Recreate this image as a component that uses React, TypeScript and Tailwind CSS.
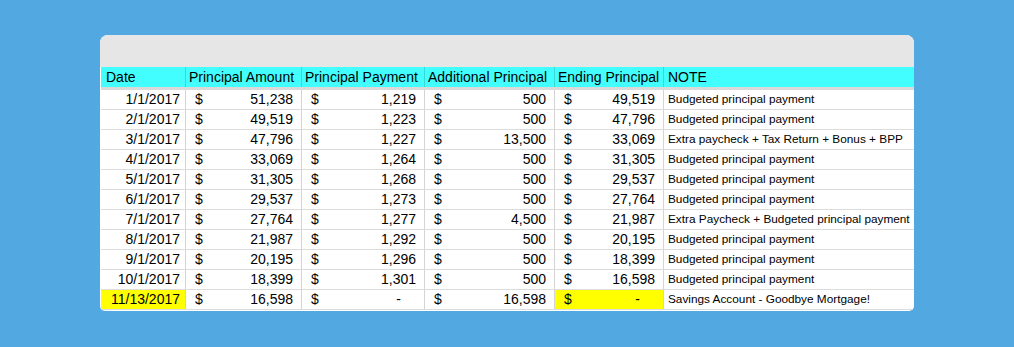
import React from "react";

type Row = {
  date: string;
  amount: string;
  payment: string;
  additional: string;
  ending: string;
  note: string;
  hl?: boolean;
};

const rows: Row[] = [
  { date: "1/1/2017", amount: "51,238", payment: "1,219", additional: "500", ending: "49,519", note: "Budgeted principal payment" },
  { date: "2/1/2017", amount: "49,519", payment: "1,223", additional: "500", ending: "47,796", note: "Budgeted principal payment" },
  { date: "3/1/2017", amount: "47,796", payment: "1,227", additional: "13,500", ending: "33,069", note: "Extra paycheck + Tax Return + Bonus + BPP" },
  { date: "4/1/2017", amount: "33,069", payment: "1,264", additional: "500", ending: "31,305", note: "Budgeted principal payment" },
  { date: "5/1/2017", amount: "31,305", payment: "1,268", additional: "500", ending: "29,537", note: "Budgeted principal payment" },
  { date: "6/1/2017", amount: "29,537", payment: "1,273", additional: "500", ending: "27,764", note: "Budgeted principal payment" },
  { date: "7/1/2017", amount: "27,764", payment: "1,277", additional: "4,500", ending: "21,987", note: "Extra Paycheck + Budgeted principal payment" },
  { date: "8/1/2017", amount: "21,987", payment: "1,292", additional: "500", ending: "20,195", note: "Budgeted principal payment" },
  { date: "9/1/2017", amount: "20,195", payment: "1,296", additional: "500", ending: "18,399", note: "Budgeted principal payment" },
  { date: "10/1/2017", amount: "18,399", payment: "1,301", additional: "500", ending: "16,598", note: "Budgeted principal payment" },
  { date: "11/13/2017", amount: "16,598", payment: "-", additional: "16,598", ending: "-", note: "Savings Account - Goodbye Mortgage!", hl: true },
];

const grid = "grid grid-cols-[85px_116px_123px_130px_109px_1fr]";

function Money({ v, hl, dash }: { v: string; hl?: boolean; dash?: boolean }) {
  return (
    <div className={`flex items-center justify-between border-r border-[#d4d4d4] pl-[9px] pr-[8px] ${hl ? "bg-[#ffff00]" : ""}`}>
      <span>$</span>
      <span className={dash ? "pr-[15px]" : ""}>{v}</span>
    </div>
  );
}

export default function App() {
  return (
    <div
      className="w-[1014px] h-[347px] bg-[#52a9e1] pt-[35px] pl-[100px]"
      style={{ fontFamily: '"Liberation Sans", Arial, sans-serif' }}
    >
      <div className="w-[814px] h-[276px] bg-white rounded-t-[8px] rounded-b-[5px] overflow-hidden flex flex-col pl-[1px]">
        <div className="h-[32px] bg-[#e6e6e6] shrink-0 -ml-[1px]" />
        <div className={`${grid} h-[20px] bg-[#43fefe] text-[14px] text-black leading-[20px] whitespace-nowrap`}>
          <div className="pl-[5px] border-r border-[#3ad8d8]">Date</div>
          <div className="pl-[3px] border-r border-[#3ad8d8]">Principal Amount</div>
          <div className="pl-[3px] border-r border-[#3ad8d8]">Principal Payment</div>
          <div className="pl-[3px] border-r border-[#3ad8d8]">Additional Principal</div>
          <div className="pl-[3px] border-r border-[#3ad8d8]">Ending Principal</div>
          <div className="pl-[4px]">NOTE</div>
        </div>
        <div className="h-[3px] bg-[#d9d9d9] shrink-0" />
        {rows.map((r, i) => (
          <div key={i} className={`${grid} h-[20px] border-b border-[#dcdcdc] text-[14px] text-black leading-[19px]`}>
            <div className={`text-right pr-[5px] border-r border-[#d4d4d4] ${r.hl ? "bg-[#ffff00]" : ""}`}>{r.date}</div>
            <Money v={r.amount} />
            <Money v={r.payment} dash={r.payment === "-"} />
            <Money v={r.additional} />
            <Money v={r.ending} hl={r.hl} dash={r.ending === "-"} />
            <div className="pl-[4px] text-[11.8px] whitespace-nowrap">{r.note}</div>
          </div>
        ))}
      </div>
    </div>
  );
}
